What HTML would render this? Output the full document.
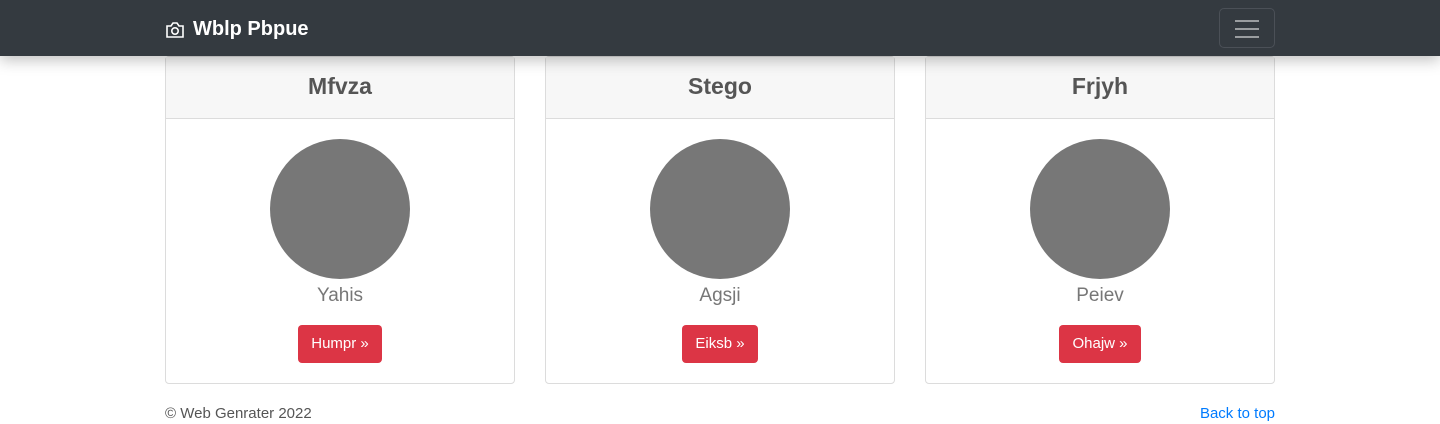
<!DOCTYPE html>
<html><head><meta charset="utf-8"><style>
*{box-sizing:border-box;margin:0;padding:0}
body{width:1440px;height:424px;background:#fff;font-family:"Liberation Sans",sans-serif;position:relative;overflow:hidden}
.nav{position:absolute;top:0;left:0;width:1440px;height:56px;background:#343a40;box-shadow:0 4px 14px rgba(0,0,0,.25);z-index:2}
.brand{position:absolute;left:165px;top:18px;color:#fff;font-weight:bold;font-size:20px;display:flex;align-items:center;gap:8px;font-family:"Liberation Sans",sans-serif}
.tog{position:absolute;left:1219px;top:8px;width:56px;height:40px;border:1px solid #4b5057;border-radius:5px}
.tog i{position:absolute;left:15px;width:24px;height:2px;background:#9a9da0}
.card{position:absolute;top:56px;width:350px;height:328px;border:1px solid #dcdcdc;border-radius:4px;text-align:center}
.hd{height:62px;background:#f7f7f7;border-bottom:1px solid #dcdcdc;font-size:23px;font-weight:bold;color:#555;line-height:58px}
.c{width:140px;height:140px;border-radius:50%;background:#777;margin:20px auto 0}
.n{font-size:19px;color:#777;margin-top:5px;line-height:24px}
.b{display:inline-block;margin-top:17px;background:#dc3545;color:#fff;font-size:15px;padding:0 13px;height:38px;line-height:38px;border-radius:4px}
.f{position:absolute;top:405px;font-size:15px;color:#555}
</style></head><body>
<div class="nav">
<div class="brand"><svg width="20" height="18" viewBox="0 0 20 18" fill="none" stroke="#fff" stroke-width="1.6"><path d="M2 5h4l2-3h4l2 3h4v11H2z"/><circle cx="10" cy="10" r="3.2"/></svg>Wblp Pbpue</div>
<div class="tog"><i style="top:11px"></i><i style="top:19px"></i><i style="top:27px"></i></div>
</div>
<div class="card" style="left:165px"><div class="hd">Mfvza</div><div class="c"></div><div class="n">Yahis</div><span class="b">Humpr »</span></div>
<div class="card" style="left:545px"><div class="hd">Stego</div><div class="c"></div><div class="n">Agsji</div><span class="b">Eiksb »</span></div>
<div class="card" style="left:925px"><div class="hd">Frjyh</div><div class="c"></div><div class="n">Peiev</div><span class="b">Ohajw »</span></div>
<div class="f" style="left:165px">© Web Genrater 2022</div>
<div class="f" style="right:165px;color:#007bff">Back to top</div>
</body></html>
